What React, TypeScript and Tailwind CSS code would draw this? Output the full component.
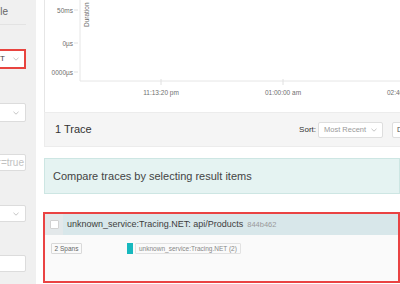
import React from "react";

const Chevron = ({ className = "" }: { className?: string }) => (
  <svg width="6" height="4" viewBox="0 0 6 4" className={className}>
    <path d="M0.5 0.8 L3 3.2 L5.5 0.8" fill="none" stroke="#b5b5b5" strokeWidth="0.8" />
  </svg>
);

function Sidebar() {
  return (
    <div className="w-[36px] shrink-0 bg-[#f0f0f0] overflow-hidden">
      <div className="w-[200px] ml-[-164px] pr-[10px] flex flex-col">
        <div className="h-[25px] border-b border-[#e3e3e3] flex items-center justify-end pb-[2px]">
          <span className="text-[10px] text-[#666] mr-[18px]">Search&nbsp;&nbsp;&nbsp;&nbsp;JSON File</span>
        </div>
        <div className="mt-[24px] h-[20px] border-2 border-[#e8443f] bg-white flex items-center justify-end pr-[5px]">
          <span className="text-[8px] text-[#444] mr-[8px] whitespace-nowrap">unknown_service:Tracing.NET</span>
          <Chevron />
        </div>
        <div className="mt-[34px] h-[19px] border border-[#dcdcdc] rounded-[2px] bg-white flex items-center justify-end pr-[6px]">
          <Chevron />
        </div>
        <div className="mt-[32px] h-[17px] border border-[#dcdcdc] rounded-[2px] bg-white flex items-center justify-end pr-[1px] overflow-hidden">
          <span className="text-[10px] text-[#c2c2c2] whitespace-nowrap">http.status_code=200 error=true</span>
        </div>
        <div className="mt-[34px] h-[17px] border border-[#dcdcdc] rounded-[2px] bg-white flex items-center justify-end pr-[6px]">
          <Chevron />
        </div>
        <div className="mt-[33px] h-[17px] border border-[#dcdcdc] rounded-[2px] bg-white" />
      </div>
    </div>
  );
}

function Chart() {
  const lbl = { fontSize: 6.5, fill: "#6e6e6e", fontFamily: "'Liberation Sans', Arial, sans-serif" } as const;
  return (
    <div className="h-[112px] border-l border-[#e6e6e6] overflow-hidden">
      <svg width="356" height="112">
        <line x1="35" y1="0" x2="35" y2="81" stroke="#e6e6e6" strokeWidth="1" />
        <line x1="35" y1="81" x2="356" y2="81" stroke="#e6e6e6" strokeWidth="1" />
        <line x1="29" y1="10" x2="33" y2="10" stroke="#e0e0e0" />
        <line x1="29" y1="43" x2="33" y2="43" stroke="#e0e0e0" />
        <line x1="29" y1="72" x2="33" y2="72" stroke="#e0e0e0" />
        <text x="28" y="12.5" textAnchor="end" style={lbl}>50ms</text>
        <text x="28" y="45.5" textAnchor="end" style={lbl}>0µs</text>
        <text x="28" y="74.5" textAnchor="end" style={lbl}>0000µs</text>
        <line x1="116" y1="79" x2="116" y2="85" stroke="#e0e0e0" />
        <line x1="238" y1="79" x2="238" y2="85" stroke="#e0e0e0" />
        <text x="116" y="94.5" textAnchor="middle" style={lbl}>11:13:20 pm</text>
        <text x="238" y="94.5" textAnchor="middle" style={lbl}>01:00:00 am</text>
        <text x="360" y="94.5" textAnchor="middle" style={lbl}>02:46:40 am</text>
        <text x="0" y="0" transform="translate(44 27) rotate(-90)" style={lbl}>Duration</text>
      </svg>
    </div>
  );
}

export default function App() {
  return (
    <div
      className="w-[400px] h-[284px] overflow-hidden flex bg-white text-[#333]"
      style={{ fontFamily: "'Liberation Sans', Arial, sans-serif" }}
    >
      <Sidebar />
      <div className="flex-1 pl-[8px] flex flex-col min-w-0">
        <Chart />
        <div className="h-[35px] bg-[#f5f5f5] border-y border-l border-[#ececec] flex items-center pl-[10px] whitespace-nowrap">
          <span className="text-[11px] text-[#333]">1 Trace</span>
          <span className="ml-auto text-[8px] text-[#333] mr-[2px]">Sort:</span>
          <div className="w-[65px] h-[16px] bg-white border border-[#dedede] rounded-[2px] flex items-center pl-[5px] pr-[5px] shrink-0">
            <span className="text-[7.5px] text-[#9a9a9a]">Most Recent</span>
            <Chevron className="ml-auto" />
          </div>
          <div className="ml-[9px] mr-[-72px] w-[80px] h-[16px] bg-white border border-[#dedede] rounded-[2px] flex items-center pl-[4px] shrink-0">
            <span className="text-[7.5px] text-[#555]">Deep Dependency Graph</span>
          </div>
        </div>
        <div className="mt-[11px] h-[36px] bg-[#e5f3f2] border border-[#cde6e3] flex items-center pl-[8px] whitespace-nowrap">
          <span className="text-[11px] text-[#444]">Compare traces by selecting result items</span>
        </div>
        <div className="mt-[18px] ml-[-1px] h-[71px] border-2 border-[#ea4343] flex flex-col whitespace-nowrap">
          <div className="h-[21px] bg-[#d8e7ea] flex items-center">
            <div className="w-[18px] h-full bg-[#e3e8ea] flex items-center justify-center">
              <div className="w-[9px] h-[9px] bg-white border border-[#d2d2d2] rounded-[1px]" />
            </div>
            <span className="ml-[4px] text-[9px] text-[#3d3d3d]">unknown_service:Tracing.NET: api/Products</span>
            <span className="ml-[4px] text-[7.5px] text-[#9a9a9a]">844b462</span>
          </div>
          <div className="flex-1 bg-[#fafafa] flex items-start pt-[8px] pl-[6px]">
            <div className="w-[31px] h-[11px] border border-[#d9d9d9] rounded-[1px] bg-[#fafafa] flex items-center justify-center">
              <span className="text-[6.5px] text-[#666]">2 Spans</span>
            </div>
            <div className="ml-[45px] w-[6px] h-[11px] bg-[#17b8be]" />
            <div className="ml-[2px] h-[11px] border border-[#e2e2e2] rounded-[1px] bg-[#fafafa] flex items-center px-[3px]">
              <span className="text-[6.5px] text-[#888]">unknown_service:Tracing.NET (2)</span>
            </div>
          </div>
        </div>
      </div>
    </div>
  );
}
